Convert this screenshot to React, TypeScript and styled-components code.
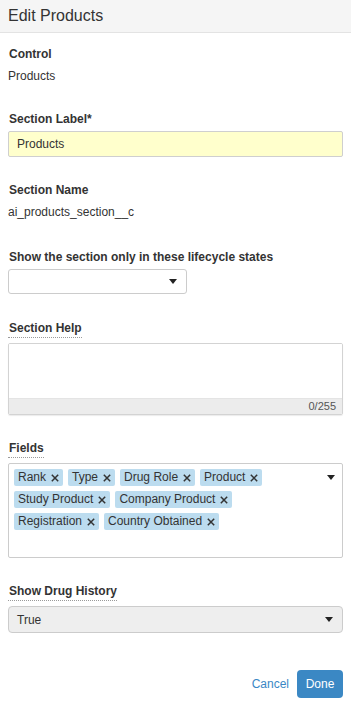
import React from "react";
import styled, { createGlobalStyle } from "styled-components";

const Global = createGlobalStyle`
  html, body { margin: 0; padding: 0; background: #fff; }
  body { font-family: "Liberation Sans", Arial, sans-serif; color: #333; font-size: 12px; }
  * { box-sizing: border-box; }
`;

const Page = styled.div`
  width: 351px;
  min-height: 702px;
  display: flex;
  flex-direction: column;
`;

const Header = styled.div`
  height: 33px;
  background: #f5f5f5;
  border-bottom: 1px solid #e3e3e3;
  padding: 0 8px;
  display: flex;
  align-items: center;
  font-size: 16px;
  color: #333;
`;

const Body = styled.div`
  padding: 14px 8px 0 8px;
  display: flex;
  flex-direction: column;
`;

const Group = styled.div<{ $mb: number }>`
  display: flex;
  flex-direction: column;
  align-items: flex-start;
  margin-bottom: ${(p) => p.$mb}px;
`;

const Label = styled.div<{ $help?: boolean }>`
  font-weight: bold;
  font-size: 12px;
  line-height: 14px;
  color: #333;
  margin-bottom: 5px;
  padding-left: 1px;
  ${(p) =>
    p.$help
      ? `padding-bottom: 2px; border-bottom: 1px dotted #9a9a9a;`
      : ``}
`;

const Value = styled.div`
  font-size: 12px;
  line-height: 20px;
  color: #333;
`;

const TextInput = styled.div`
  width: 335px;
  height: 26px;
  background: #ffffcc;
  border: 1px solid #cfcfcf;
  border-radius: 2px;
  padding: 0 8px;
  display: flex;
  align-items: center;
  font-size: 12px;
  color: #333;
`;

const Select = styled.div<{ $width: number; $height: number; $bg: string; $radius: number }>`
  width: ${(p) => p.$width}px;
  height: ${(p) => p.$height}px;
  background: ${(p) => p.$bg};
  border: 1px solid #cccccc;
  border-radius: ${(p) => p.$radius}px;
  padding: 0 9px 0 8px;
  display: flex;
  align-items: center;
  justify-content: space-between;
  font-size: 12px;
  color: #333;
`;

const Caret = styled.span`
  width: 0;
  height: 0;
  border-left: 4px solid transparent;
  border-right: 4px solid transparent;
  border-top: 5px solid #222;
  margin-left: auto;
`;

const TextArea = styled.div`
  width: 335px;
  border: 1px solid #d3d3d3;
  border-radius: 2px;
  box-shadow: 0 1px 1px rgba(0, 0, 0, 0.08);
  display: flex;
  flex-direction: column;
  overflow: hidden;
`;

const TextAreaBody = styled.div`
  height: 54px;
  background: #fff;
`;

const Counter = styled.div`
  height: 16px;
  background: #ececec;
  border-top: 1px solid #e4e4e4;
  font-size: 11px;
  line-height: 15px;
  color: #555;
  text-align: right;
  padding-right: 6px;
`;

const MultiBox = styled.div`
  width: 335px;
  height: 95px;
  border: 1px solid #cccccc;
  border-radius: 2px;
  padding: 5px;
  display: flex;
  align-items: flex-start;
`;

const Tags = styled.div`
  flex: 1;
  display: flex;
  flex-wrap: wrap;
  row-gap: 5px;
  column-gap: 5px;
  align-content: flex-start;
`;

const Tag = styled.span`
  height: 17px;
  line-height: 17px;
  background: #bcdcef;
  border-radius: 2px;
  padding: 0 4px;
  font-size: 12px;
  color: #333;
  display: inline-flex;
  align-items: center;
  gap: 5px;
`;

const CaretCol = styled.div`
  width: 22px;
  display: flex;
  justify-content: flex-end;
  padding: 6px 2px 0 0;
`;

const Footer = styled.div`
  display: flex;
  justify-content: flex-end;
  align-items: center;
  gap: 8px;
  padding: 0 8px;
  margin-top: 37px;
`;

const CancelLink = styled.span`
  color: #3a87c5;
  font-size: 12px;
`;

const DoneButton = styled.span`
  height: 28px;
  width: 46px;
  border-radius: 4px;
  background: #3b88c4;
  color: #fff;
  font-size: 12px;
  display: flex;
  align-items: center;
  justify-content: center;
`;

const Cross = () => (
  <svg width="8" height="8" viewBox="0 0 8 8">
    <path d="M0.8 0.8 L7.2 7.2 M7.2 0.8 L0.8 7.2" stroke="#333" strokeWidth="1.5" />
  </svg>
);

const fields = [
  "Rank",
  "Type",
  "Drug Role",
  "Product",
  "Study Product",
  "Company Product",
  "Registration",
  "Country Obtained",
];

export default function App() {
  return (
    <Page>
      <Global />
      <Header>Edit Products</Header>
      <Body>
        <Group $mb={26}>
          <Label>Control</Label>
          <Value>Products</Value>
        </Group>
        <Group $mb={26}>
          <Label>Section Label*</Label>
          <TextInput>Products</TextInput>
        </Group>
        <Group $mb={28}>
          <Label>Section Name</Label>
          <Value>ai_products_section__c</Value>
        </Group>
        <Group $mb={27}>
          <Label>Show the section only in these lifecycle states</Label>
          <Select $width={179} $height={25} $bg="#fff" $radius={3}>
            <Caret />
          </Select>
        </Group>
        <Group $mb={26}>
          <Label $help>Section Help</Label>
          <TextArea>
            <TextAreaBody />
            <Counter>0/255</Counter>
          </TextArea>
        </Group>
        <Group $mb={26}>
          <Label $help>Fields</Label>
          <MultiBox>
            <Tags>
              {fields.map((f) => (
                <Tag key={f}>
                  {f}
                  <Cross />
                </Tag>
              ))}
            </Tags>
            <CaretCol>
              <Caret />
            </CaretCol>
          </MultiBox>
        </Group>
        <Group $mb={0}>
          <Label $help>Show Drug History</Label>
          <Select $width={335} $height={27} $bg="#eeeeee" $radius={4}>
            <span>True</span>
            <Caret />
          </Select>
        </Group>
      </Body>
      <Footer>
        <CancelLink>Cancel</CancelLink>
        <DoneButton>Done</DoneButton>
      </Footer>
    </Page>
  );
}
